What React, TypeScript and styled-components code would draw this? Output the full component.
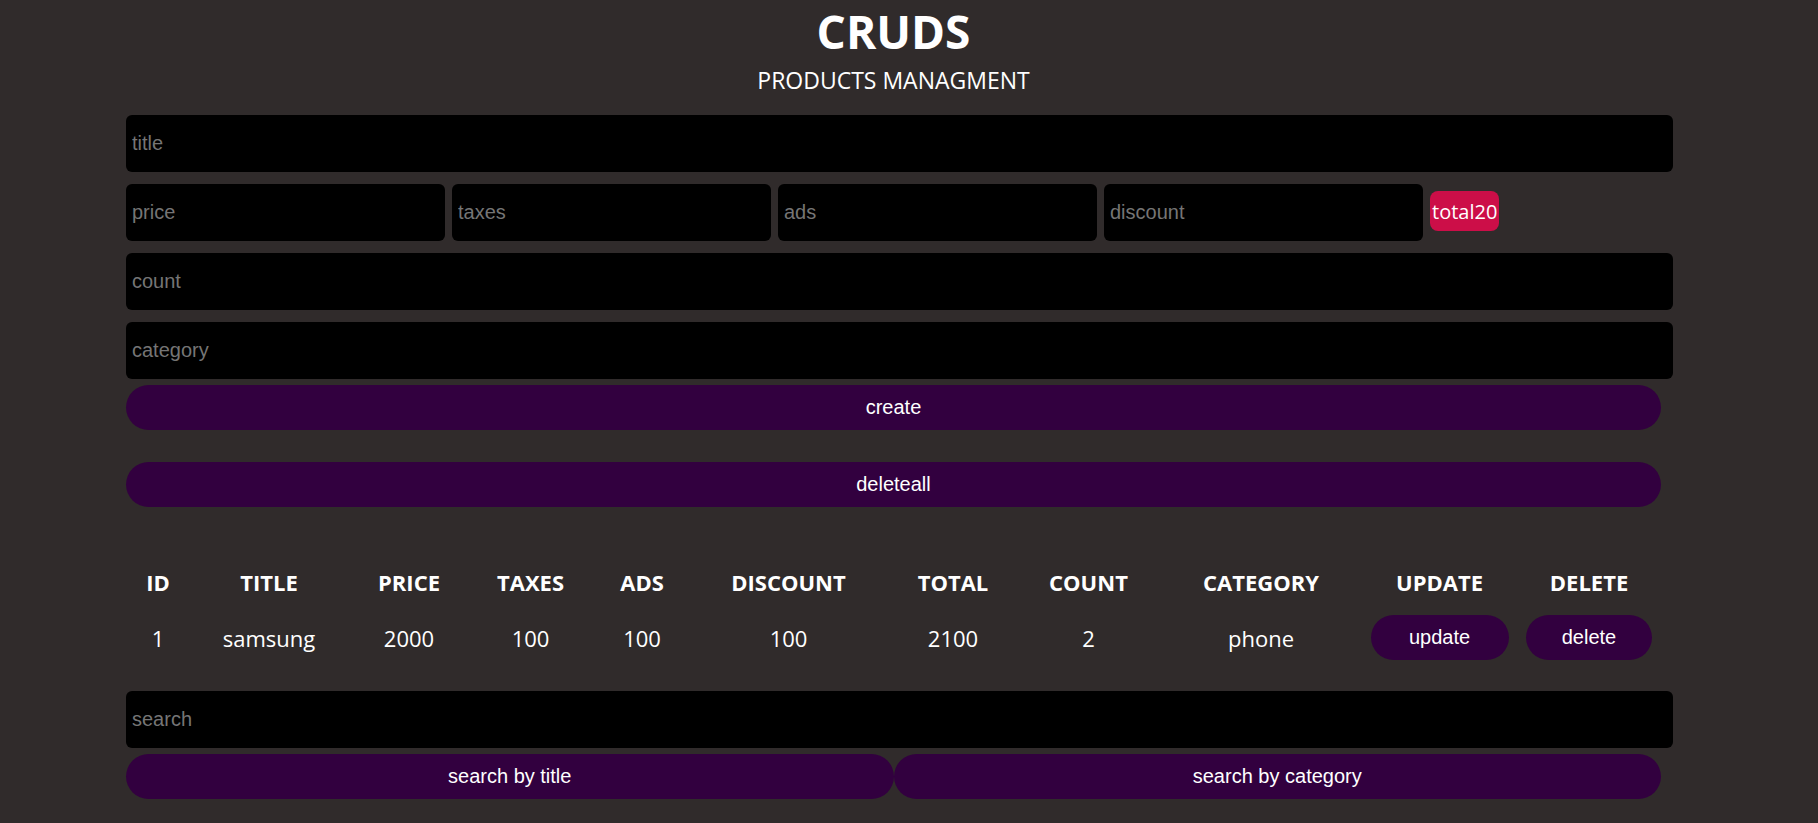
import React from "react";
import styled, { createGlobalStyle } from "styled-components";

const Global = createGlobalStyle`
  html, body { margin: 0; padding: 0; }
  body {
    background: #302b2b;
    color: #fff;
    font-family: "Open Sans", "Noto Sans", sans-serif;
  }
`;

const Container = styled.div`
  width: 1535px;
  margin-left: 126px;
  display: flex;
  flex-direction: column;
`;

const Head = styled.header`
  text-align: center;
  text-transform: uppercase;
  margin-bottom: 19px;
`;

const Title = styled.h1`
  margin: 0;
  font-size: 46px;
  font-weight: 700;
  line-height: normal;
`;

const Subtitle = styled.h2`
  margin: 2px 0 0 0;
  font-size: 23px;
  font-weight: 400;
  line-height: normal;
`;

const Form = styled.div`
  display: flex;
  flex-direction: column;
  gap: 12px;
`;

const Field = styled.input<{ $w?: number }>`
  display: block;
  box-sizing: content-box;
  width: ${(p) => (p.$w ? `${p.$w}px` : "100%")};
  flex: none;
  height: 57px;
  padding: 0 6px;
  margin: 0;
  border: none;
  outline: none;
  background: #000;
  border-radius: 6px;
  color: #fff;
  font-family: "Liberation Sans", Arial, sans-serif;
  font-size: 20px;
  &::placeholder {
    color: #757575;
  }
`;

const PriceRow = styled.div`
  display: flex;
  align-items: flex-start;
  gap: 7px;
`;

const Total = styled.span`
  display: flex;
  align-items: center;
  height: 40px;
  margin-top: 7px;
  padding: 0 2px;
  background: #cc0e48;
  border-radius: 8px;
  font-family: "Open Sans", sans-serif;
  font-size: 20px;
  color: #fff;
`;

const Button = styled.button<{ $w?: number; $mt?: number }>`
  display: block;
  width: ${(p) => (p.$w ? `${p.$w}px` : "100%")};
  height: 45px;
  margin: ${(p) => p.$mt ?? 0}px 0 0 0;
  padding: 0;
  border: none;
  border-radius: 23px;
  background: #32003f;
  color: #fff;
  font-family: "Liberation Sans", Arial, sans-serif;
  font-size: 20px;
  cursor: pointer;
`;

const Table = styled.table`
  width: 1540px;
  table-layout: fixed;
  border-collapse: collapse;
  margin: 51px 0 22px 0;
  text-align: center;
`;

const Col = styled.col<{ $w: number }>`
  width: ${(p) => p.$w}px;
`;

const Th = styled.th`
  padding: 9px 0;
  font-size: 22px;
  font-weight: 700;
  line-height: normal;
  text-transform: uppercase;
`;

const Td = styled.td`
  padding: 9px 0;
  font-size: 22px;
  line-height: normal;
  vertical-align: middle;
`;

const CellButton = styled(Button)`
  margin: 0 auto;
`;

const SearchRow = styled.div`
  display: flex;
  margin-top: 6px;
`;

const SearchButton = styled(Button)`
  flex: 1;
  width: auto;
`;

const cols = [64, 158, 122, 121, 102, 191, 138, 133, 212, 145, 154];
const heads = ["id", "title", "price", "taxes", "ads", "discount", "total", "count", "category", "update", "delete"];

export default function App() {
  return (
    <>
      <Global />
      <Container>
        <Head>
          <Title>cruds</Title>
          <Subtitle>products managment</Subtitle>
        </Head>
        <Form>
          <Field placeholder="title" />
          <PriceRow>
            <Field $w={307} placeholder="price" />
            <Field $w={307} placeholder="taxes" />
            <Field $w={307} placeholder="ads" />
            <Field $w={307} placeholder="discount" />
            <Total>total20</Total>
          </PriceRow>
          <Field placeholder="count" />
          <Field placeholder="category" />
        </Form>
        <Button $mt={6}>create</Button>
        <Button $mt={32}>deleteall</Button>
        <Table>
          <colgroup>
            {cols.map((w, i) => (
              <Col key={i} $w={w} />
            ))}
          </colgroup>
          <thead>
            <tr>
              {heads.map((h) => (
                <Th key={h}>{h}</Th>
              ))}
            </tr>
          </thead>
          <tbody>
            <tr>
              <Td>1</Td>
              <Td>samsung</Td>
              <Td>2000</Td>
              <Td>100</Td>
              <Td>100</Td>
              <Td>100</Td>
              <Td>2100</Td>
              <Td>2</Td>
              <Td>phone</Td>
              <Td>
                <CellButton $w={138}>update</CellButton>
              </Td>
              <Td>
                <CellButton $w={126}>delete</CellButton>
              </Td>
            </tr>
          </tbody>
        </Table>
        <Field placeholder="search" />
        <SearchRow>
          <SearchButton>search by title</SearchButton>
          <SearchButton>search by category</SearchButton>
        </SearchRow>
      </Container>
    </>
  );
}
